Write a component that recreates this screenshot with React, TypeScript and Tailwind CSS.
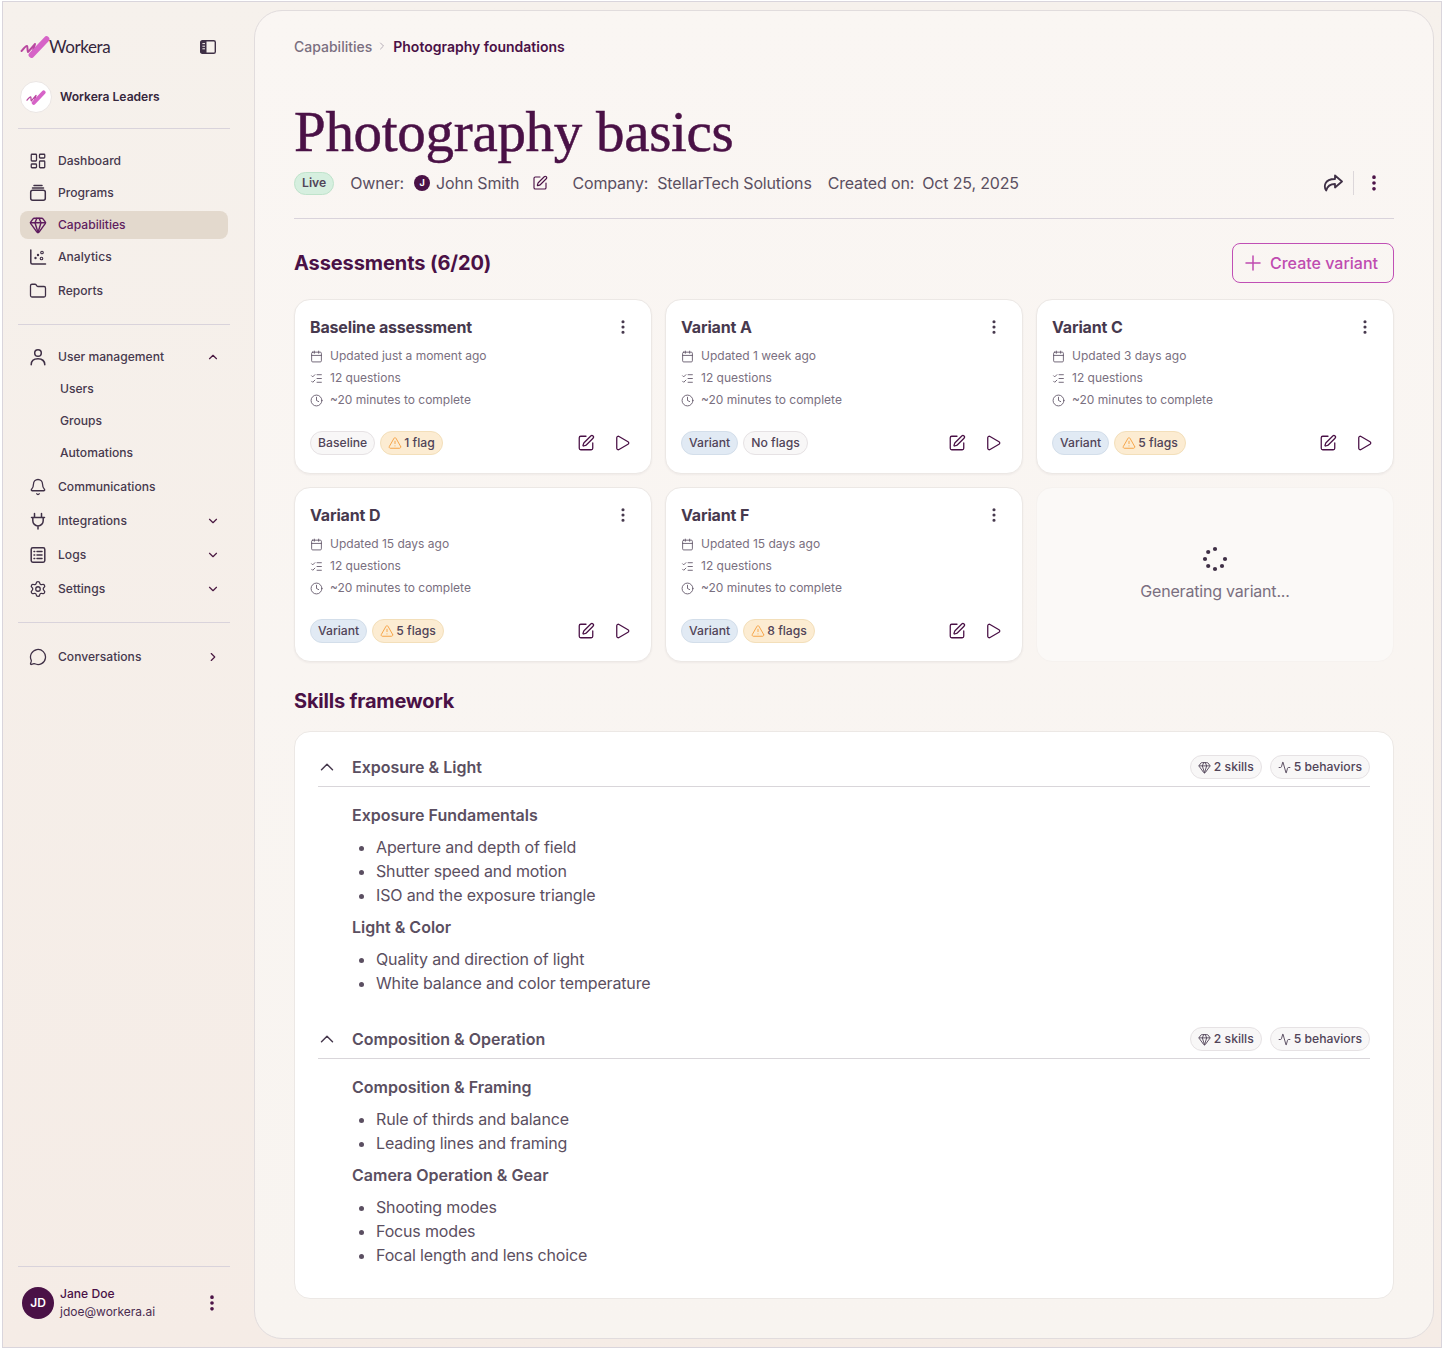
import {
  Activity,
  Bell,
  Calendar,
  ChevronDown,
  ChevronRight,
  ChevronUp,
  Clock,
  EllipsisVertical,
  Folder,
  Gem,
  LayoutDashboard,
  ListChecks,
  MessageCircle,
  Play,
  Plus,
  Settings,
  SquarePen,
  TriangleAlert,
} from 'lucide-react'
import type { ReactNode } from 'react'

const font = { fontFamily: 'Inter, "Noto Sans", sans-serif' }

function LogoMark({ className }: { className: string }) {
  return (
    <svg viewBox="0 0 30 22" className={className} fill="none" strokeLinecap="round" strokeLinejoin="round">
      <path d="M1.5 15 C4 12 6 9.5 7 10 C8 10.5 7 15 8 16 C9.5 15 13 10 15 8 L12 18" stroke="#b8479f" strokeWidth="2" />
      <path d="M11.5 19 L26.5 3.2" stroke="#d663c7" strokeWidth="5.8" />
    </svg>
  )
}

const svgIcon = 'h-[18px] w-[18px]'

function ProgramsIcon() {
  return (
    <svg viewBox="0 0 18 18" className={svgIcon} fill="none" stroke="#3f3046" strokeWidth="1.5">
      <path d="M5 1.5h8M3.5 4h11" strokeLinecap="round" />
      <rect x="1.7" y="6.3" width="14.6" height="10" rx="2" />
    </svg>
  )
}

function AnalyticsIcon() {
  return (
    <svg viewBox="0 0 18 18" className={svgIcon} fill="none" stroke="#3f3046" strokeWidth="1.5">
      <path d="M1.8 2v12.5a1.5 1.5 0 0 0 1.5 1.5h13.2" strokeLinecap="round" />
      <circle cx="6.5" cy="10" r="1.2" fill="#3f3046" stroke="none" />
      <circle cx="9" cy="7" r="1.2" fill="#3f3046" stroke="none" />
      <circle cx="12.5" cy="10.5" r="1.3" strokeWidth="1.1" />
      <circle cx="13" cy="4.5" r="1.3" strokeWidth="1.1" />
    </svg>
  )
}

function UserIcon() {
  return (
    <svg viewBox="0 0 18 18" className={svgIcon} fill="none" stroke="#3f3046" strokeWidth="1.5">
      <circle cx="9" cy="5" r="3.3" />
      <path d="M2.2 16.8c0-4 3-6 6.8-6s6.8 2 6.8 6" strokeLinecap="round" />
    </svg>
  )
}

function PlugIcon() {
  return (
    <svg viewBox="0 0 18 18" className={svgIcon} fill="none" stroke="#3f3046" strokeWidth="1.5" strokeLinecap="round" strokeLinejoin="round">
      <path d="M5.5 1.5v4M12.5 1.5v4M2.5 5.5h13M3.8 5.5v3.2a5.2 5.2 0 0 0 10.4 0V5.5M9 13.9v3" />
    </svg>
  )
}

function LogsIcon() {
  return (
    <svg viewBox="0 0 18 18" className={svgIcon} fill="none" stroke="#3f3046" strokeWidth="1.5">
      <rect x="2.2" y="1.8" width="13.6" height="14.4" rx="1.6" />
      <path d="M5 5.5h.7M5 9h.7M5 12.5h.7M8 5.5h5M8 9h5M8 12.5h5" strokeLinecap="round" />
    </svg>
  )
}

function ShareIcon() {
  return (
    <svg viewBox="0 0 20 18" className="h-[18px] w-5" fill="none" stroke="#3f3046" strokeWidth="1.8" strokeLinejoin="round">
      <path d="M12 1.5 L19 7.5 L12 13.5 V10 C7.5 10 4.5 11.5 3.2 16.5 C0.8 13 0.8 5 12 5 Z" />
    </svg>
  )
}

function SidebarToggle() {
  return (
    <svg viewBox="0 0 16 14" className="h-[14px] w-4">
      <rect x="0.7" y="0.7" width="14.6" height="12.6" rx="1.6" fill="none" stroke="#3f3046" strokeWidth="1.4" />
      <path d="M1 1h5.5v12H1z" fill="#3f3046" />
      <path d="M2.4 3.6h2.6M2.4 6.2h2.6M2.4 8.8h2.6" stroke="#f6f1ec" strokeWidth="1" />
    </svg>
  )
}

function Spinner() {
  const dots = [
    [20, 6],
    [13.2, 9],
    [10, 16],
    [13.2, 23],
    [20, 26],
    [27, 23],
    [30, 16],
  ]
  return (
    <svg viewBox="4 0 32 32" className="h-8 w-8">
      {dots.map(([cx, cy]) => (
        <circle key={`${cx}-${cy}`} cx={cx} cy={cy} r="2.1" fill="#3f3046" />
      ))}
    </svg>
  )
}

function NavItem({
  icon,
  label,
  active,
  trailing,
  className = 'mb-1',
}: {
  icon?: ReactNode
  label: string
  active?: boolean
  trailing?: ReactNode
  className?: string
}) {
  return (
    <div
      className={`flex h-7 items-center rounded-lg pl-[9px] pr-[7px] text-[12.1px] font-medium ${
        active ? 'bg-[#e3d9cd] text-[#5f1d5f]' : 'text-[#47394e]'
      } ${className}`}
    >
      <span className="flex w-[29px] shrink-0 items-center">{icon}</span>
      <span className={icon ? '' : 'pl-[2px]'}>{label}</span>
      {trailing && <span className="ml-auto flex w-4 justify-center">{trailing}</span>}
    </div>
  )
}

function Sidebar() {
  const ic = 'h-[18px] w-[18px] text-[#3f3046]'
  const down = <ChevronDown className="h-[14px] w-[14px] text-[#4a1942]" />
  return (
    <aside className="flex w-[251px] shrink-0 flex-col pl-[15px] pr-[24px] pt-[22px] pb-[18px]">
      <div className="flex h-[30px] items-center pr-[14px]">
        <LogoMark className="ml-[2px] h-[22px] w-[30px]" />
        <span className="-ml-[1px] text-[17px] tracking-[-0.4px] text-[#35263c]" style={{ fontFamily: 'Lato, sans-serif' }}>
          Workera
        </span>
        <span className="ml-auto">
          <SidebarToggle />
        </span>
      </div>
      <div className="ml-[2px] mt-[19px] flex h-[32px] items-center gap-[8px]">
        <span className="flex h-8 w-8 items-center justify-center rounded-full border border-[#ebe6e4] bg-white">
          <LogoMark className="h-[15px] w-[20px]" />
        </span>
        <span className="text-[12.1px] font-semibold text-[#35263c]">Workera Leaders</span>
      </div>
      <div className="mt-[15px] h-px bg-[#d9d3db]" />
      <nav className="mt-[18px] pl-[2px] pr-[2px]">
        <NavItem icon={<LayoutDashboard className={ic} strokeWidth={1.7} />} label="Dashboard" />
        <NavItem icon={<ProgramsIcon />} label="Programs" />
        <NavItem icon={<Gem className="h-[18px] w-[18px] text-[#5f1d5f]" strokeWidth={1.9} />} label="Capabilities" active />
        <NavItem icon={<AnalyticsIcon />} label="Analytics" className="mb-[6px]" />
        <NavItem icon={<Folder className={ic} strokeWidth={1.7} />} label="Reports" className="" />
      </nav>
      <div className="mt-[19px] h-px bg-[#d9d3db]" />
      <nav className="mt-[18px] pl-[2px] pr-[2px]">
        <NavItem icon={<UserIcon />} label="User management" trailing={<ChevronUp className="h-[14px] w-[14px] text-[#4a1942]" />} />
        <NavItem label="Users" />
        <NavItem label="Groups" />
        <NavItem label="Automations" className="mb-[6px]" />
        <NavItem icon={<Bell className={ic} strokeWidth={1.7} />} label="Communications" className="mb-[6px]" />
        <NavItem icon={<PlugIcon />} label="Integrations" trailing={down} className="mb-[6px]" />
        <NavItem icon={<LogsIcon />} label="Logs" trailing={down} className="mb-[6px]" />
        <NavItem icon={<Settings className={ic} strokeWidth={1.7} />} label="Settings" trailing={down} className="" />
      </nav>
      <div className="mt-[19px] h-px bg-[#d9d3db]" />
      <nav className="mt-[20px] pl-[2px] pr-[2px]">
        <NavItem
          icon={<MessageCircle className={ic} strokeWidth={1.7} />}
          label="Conversations"
          trailing={<ChevronRight className="h-[14px] w-[14px] text-[#4a1942]" />}
          className=""
        />
      </nav>
      <div className="mt-auto h-px bg-[#d9d3db]" />
      <div className="mt-[18px] flex items-center pl-[4px] pr-[8px]">
        <span className="flex h-8 w-8 items-center justify-center rounded-full bg-[#4a1146] text-[12px] font-semibold text-white">
          JD
        </span>
        <div className="ml-[6px] leading-[18px]">
          <div className="text-[12.1px] font-medium text-[#4a1146]">Jane Doe</div>
          <div className="text-[12px] text-[#4a2b50]">jdoe@workera.ai</div>
        </div>
        <EllipsisVertical className="ml-auto h-5 w-5 text-[#4a1146]" strokeWidth={2.4} />
      </div>
    </aside>
  )
}

function Badge({ kind, children }: { kind: 'gray' | 'blue' | 'amber'; children: ReactNode }) {
  const tone = {
    gray: 'border-[#e6e2e4] bg-[#f8f7f7]',
    blue: 'border-[#d3deea] bg-[#e1eaf4]',
    amber: 'border-[#f3dfba] bg-[#fcecd2]',
  }[kind]
  return (
    <span className={`flex h-[24px] items-center gap-[2px] rounded-full border px-[7px] text-[12.2px] font-medium text-[#514458] ${tone}`}>
      {kind === 'amber' && <TriangleAlert className="h-[14px] w-[14px] text-[#f59f3f]" strokeWidth={1.6} />}
      {children}
    </span>
  )
}

type Variant = {
  title: string
  updated: string
  type: string
  kind: 'gray' | 'blue'
  flags: string
}

const variants: Variant[] = [
  { title: 'Baseline assessment', updated: 'Updated just a moment ago', type: 'Baseline', kind: 'gray', flags: '1 flag' },
  { title: 'Variant A', updated: 'Updated 1 week ago', type: 'Variant', kind: 'blue', flags: 'No flags' },
  { title: 'Variant C', updated: 'Updated 3 days ago', type: 'Variant', kind: 'blue', flags: '5 flags' },
  { title: 'Variant D', updated: 'Updated 15 days ago', type: 'Variant', kind: 'blue', flags: '5 flags' },
  { title: 'Variant F', updated: 'Updated 15 days ago', type: 'Variant', kind: 'blue', flags: '8 flags' },
]

function MetaRow({ icon, text }: { icon: ReactNode; text: string }) {
  return (
    <div className="flex h-[22px] items-center gap-[8px] text-[12px] text-[#7a6f80]">
      <span className="flex w-3 justify-center">{icon}</span>
      {text}
    </div>
  )
}

function VariantCard({ v }: { v: Variant }) {
  const ic = 'h-[13px] w-[13px] text-[#5f5466] shrink-0'
  return (
    <div className="flex h-[175px] flex-col rounded-2xl border border-[#ece8e5] bg-white px-[15px] pt-[15px] shadow-[0_1px_2px_rgba(60,40,60,0.05)]">
      <div className="flex h-[24px] items-center justify-between pr-[4px]">
        <span className="text-[16px] font-[650] tracking-[-0.16px] text-[#47394e]">{v.title}</span>
        <EllipsisVertical className="h-[18px] w-[18px] text-[#47394e]" strokeWidth={2.2} />
      </div>
      <div className="mt-[6px]">
        <MetaRow icon={<Calendar className={ic} strokeWidth={1.6} />} text={v.updated} />
        <MetaRow icon={<ListChecks className={ic} strokeWidth={1.6} />} text="12 questions" />
        <MetaRow icon={<Clock className={ic} strokeWidth={1.6} />} text="~20 minutes to complete" />
      </div>
      <div className="mt-[20px] flex items-center gap-[5px]">
        <Badge kind={v.kind}>{v.type}</Badge>
        <Badge kind={v.flags === 'No flags' ? 'gray' : 'amber'}>{v.flags}</Badge>
        <span className="ml-auto flex items-center gap-[18px] pr-[5px]">
          <SquarePen className="h-[18px] w-[18px] text-[#4a1146]" strokeWidth={1.7} />
          <Play className="h-[18px] w-[18px] text-[#4a1146]" strokeWidth={1.7} />
        </span>
      </div>
    </div>
  )
}

function SkillGroup({ heading, items, first }: { heading: string; items: string[]; first?: boolean }) {
  return (
    <div className={first ? 'mt-[16px] pl-[34px]' : 'mt-[8px] pl-[34px]'}>
      <div className="text-[16px] font-semibold leading-6 text-[#5b4f61]">{heading}</div>
      <ul className="mt-[8px] list-disc pl-[24px] text-[16px] leading-6 tracking-[-0.16px] text-[#5b4f61] marker:text-[#5b4f61]">
        {items.map((item) => (
          <li key={item}>{item}</li>
        ))}
      </ul>
    </div>
  )
}

function SkillHeader({ title }: { title: string }) {
  const pill = 'flex h-[24px] items-center gap-[3px] rounded-full border border-[#e6e2e4] bg-[#f8f7f7] px-[7px] text-[12.2px] font-medium text-[#514458]'
  return (
    <div className="flex h-[32px] items-start border-b border-[#d9d6da]">
      <div className="flex h-[24px] items-center">
        <ChevronUp className="-ml-[2px] h-[22px] w-[22px] text-[#47394e]" strokeWidth={1.6} />
        <span className="ml-[14px] text-[16px] font-semibold text-[#5b4f61]">{title}</span>
      </div>
      <div className="ml-auto flex items-center gap-[8px]">
        <span className={pill}>
          <Gem className="h-[13px] w-[13px] text-[#514458]" strokeWidth={1.7} />2 skills
        </span>
        <span className={pill}>
          <Activity className="h-[13px] w-[13px] text-[#514458]" strokeWidth={1.7} />5 behaviors
        </span>
      </div>
    </div>
  )
}

export default function App() {
  return (
    <div className="h-[1350px] w-[1444px] bg-white px-[2px] pb-[2px] pt-px" style={font}>
      <div className="flex h-full border border-[#d9d5dc] bg-gradient-to-b from-[#f6f1ec] to-[#f5ece6] pb-[8px] pr-[7px] pt-[8px]">
        <Sidebar />
        <main className="flex-1 rounded-[28px] border border-[#e1dcdd] bg-gradient-to-b from-[#faf6f3] to-[#f8f4f0] px-[39px] pt-[25px]">
          <div className="flex h-5 items-center text-[14px]">
            <span className="font-medium text-[#7a6f80]">Capabilities</span>
            <ChevronRight className="ml-[4px] mr-[5px] h-3 w-3 text-[#b6aeb8]" />
            <span className="font-semibold text-[#4a1146]">Photography foundations</span>
          </div>
          <h1
            className="mt-[44px] text-[57px] leading-[64px] tracking-[-0.3px] text-[#4a1146] [-webkit-text-stroke:0.5px_#4a1146]"
            style={{ fontFamily: '"Liberation Serif", serif' }}
          >
            Photography basics
          </h1>
          <div className="mt-[7px] flex h-[24px] items-center text-[16px] tracking-[-0.16px] text-[#5b4f61]">
            <span className="flex h-[23px] items-center rounded-full border border-[#bfe3cb] bg-[#d6efdf] px-[7px] text-[12.2px] font-semibold tracking-normal text-[#514458]">
              Live
            </span>
            <span className="ml-[16px]">Owner:</span>
            <span className="ml-[10px] flex h-[16px] w-[16px] items-center justify-center rounded-full bg-[#4a1146] text-[9px] font-bold text-white">
              J
            </span>
            <span className="ml-[6px]">John Smith</span>
            <SquarePen className="ml-[13px] h-4 w-4 text-[#4a1146]" strokeWidth={1.7} />
            <span className="ml-[24px]">Company:</span>
            <span className="ml-[9px]">StellarTech Solutions</span>
            <span className="ml-[16px]">Created on:</span>
            <span className="ml-[8px]">Oct 25, 2025</span>
            <span className="ml-auto flex items-center pr-[10px]">
              <ShareIcon />
              <span className="mx-[10px] h-[24px] w-px bg-[#dcd7da]" />
              <EllipsisVertical className="h-5 w-5 text-[#4a1146]" strokeWidth={2.4} />
            </span>
          </div>
          <div className="mt-[23px] h-px bg-[#d9d3db]" />

          <div className="mt-[24px] flex items-center justify-between">
            <h2 className="text-[20px] font-[650] tracking-[-0.1px] text-[#4a1146]">Assessments (6/20)</h2>
            <button className="flex h-[40px] w-[162px] items-center justify-start gap-[5px] rounded-lg border border-[#c04fb5] pl-[8px] text-[16px] font-medium text-[#bf4bb0]">
              <Plus className="h-6 w-6" strokeWidth={1.5} />
              Create variant
            </button>
          </div>
          <div className="mt-[16px] grid grid-cols-3 gap-x-[13px] gap-y-[13px]">
            {variants.map((v) => (
              <VariantCard key={v.title} v={v} />
            ))}
            <div className="flex h-[175px] flex-col items-center justify-center rounded-2xl border border-[#f6f2ef] bg-[#fbf9f7] pb-[3px]">
              <Spinner />
              <span className="mt-[4px] text-[16px] tracking-[-0.2px] text-[#7a6f80]">Generating variant...</span>
            </div>
          </div>

          <h2 className="mt-[25px] text-[20px] font-[650] leading-7 tracking-[-0.2px] text-[#4a1146]">Skills framework</h2>
          <section className="mt-[16px] h-[568px] rounded-2xl border border-[#ece8e5] bg-white px-[23px] pt-[23px]">
            <SkillHeader title="Exposure & Light" />
            <SkillGroup
              first
              heading="Exposure Fundamentals"
              items={['Aperture and depth of field', 'Shutter speed and motion', 'ISO and the exposure triangle']}
            />
            <SkillGroup
              heading="Light & Color"
              items={['Quality and direction of light', 'White balance and color temperature']}
            />
            <div className="mt-[32px]">
              <SkillHeader title="Composition & Operation" />
            </div>
            <SkillGroup first heading="Composition & Framing" items={['Rule of thirds and balance', 'Leading lines and framing']} />
            <SkillGroup
              heading="Camera Operation & Gear"
              items={['Shooting modes', 'Focus modes', 'Focal length and lens choice']}
            />
          </section>
        </main>
      </div>
    </div>
  )
}
